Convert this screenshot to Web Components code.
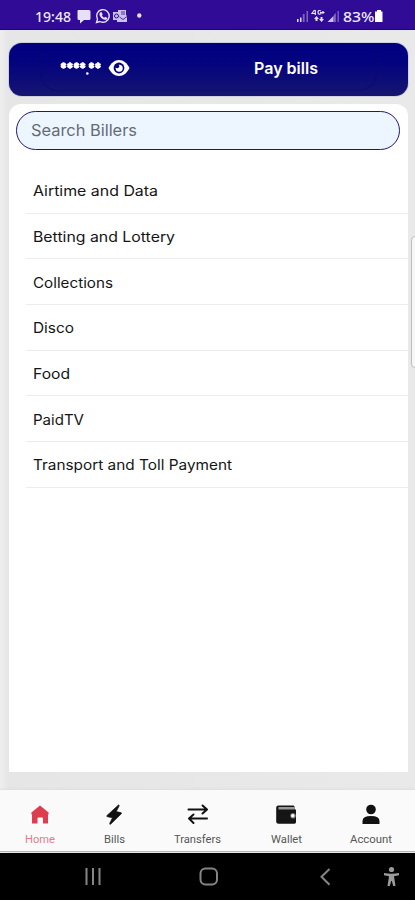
<!DOCTYPE html>
<html lang="en"><head><meta charset="utf-8"><title>Pay bills</title>
<style>
html,body{margin:0;height:900px;overflow:hidden;background:#e9e9ea;font-family:Inter,"Open Sans",sans-serif}
</style></head><body>
<bill-app></bill-app>
<script>
const define=(name,html,setup)=>customElements.define(name,class extends HTMLElement{
  connectedCallback(){
    if(this.shadowRoot)return;
    const t=document.createElement('template');
    t.innerHTML=typeof html==='function'?html(this):html;
    this.attachShadow({mode:'open'}).append(t.content.cloneNode(true));
    if(setup)setup(this);
  }
});

// Text stretched so that it spans the width given in "w".
define('fit-text',`<style>:host{display:inline-block;white-space:nowrap}span{display:inline-block;transform-origin:0 50%}</style><span><slot></slot></span>`,el=>{
  const s=el.shadowRoot.querySelector('span'),w=+el.getAttribute('w');
  const natural=s.getBoundingClientRect().width;
  el.style.width=w+'px';
  s.style.transform=`scaleX(${w/natural})`;
});

define('status-bar',`<style>
:host{display:flex;align-items:center;height:30px;box-sizing:border-box;padding:3px 31px 0 35px;background:#300b96;border-bottom:1px solid #240080;color:#eeeafc;font:500 14px "Noto Sans",sans-serif}
svg{display:block;fill:#e6e0f8;flex:none}i{flex:1}
</style>
<fit-text w="36">19:48</fit-text>
<svg width="75" height="18" viewBox="0 0 75 18">
<path d="M7 3h11q1.500 0 1.500 1.500v7q0 1.500-1.500 1.500h-5l-4 3.500v-3.500h-1q-1.500 0-1.500-1.500v-7q0-1.500 .5-1.500z"/>
<path d="M25.500 15.500l1-3.400a6.300 6.300 0 1 1 2.500 2.400z" fill="none" stroke="#e6e0f8" stroke-width="1.400"/>
<path d="M29 5.500l1.500-.5 1.200 2.400-.8 1c.5 1 1.300 1.800 2.300 2.300l1-.9 2.200 1.200c-.2 1.500-1.200 2-2.500 1.800-3-.6-5.300-3.400-5.500-5.600z"/>
<path d="M47 3h8v5l1 1v6h-10v-2h-4v-8h5z" opacity=".85"/><circle cx="45.500" cy="9" r="2" fill="none" stroke="#300b96"/><path d="M50 5h4M50 7h4M48.500 10l3.500 2.500 4-3" fill="none" stroke="#300b96" stroke-width=".8"/>
<circle cx="68.300" cy="8.500" r="2.200"/></svg><i></i>
<svg width="46" height="18" viewBox="0 0 46 18">
<path d="M0 12h1.500v3H0zM3 10.500h1.500v4.500H3z"/><path d="M5.800 7h1.800v8H5.800zM9.500 4h1.500v11H9.500z" opacity=".42"/>
<path d="M17.500 3l-2.500 3.500h4M18.300 3v5M24 4q-3-1.500-3 1.300t3 1.500v-1.300h-1M24.500 5.500h3M26 4v3" fill="none" stroke="#e6e0f8" stroke-width="1.200"/>
<path d="M17 12l2.500-3 2.500 3h-1.500v2h-2v-2zM22 12h1.500v-2h2v2h1.500l-2.500 3z"/>
<path d="M30.500 15l6-6v6z" opacity=".85"/><path d="M36.800 8l2-2v9h-2zM40.500 4h1.300v11h-1.300z" opacity=".45"/></svg>
<fit-text w="31.500">83%</fit-text>
<svg width="10" height="18" viewBox="0 0 10 18"><path d="M3 3h4v1.500h1.500v10.500h-7.500v-10.500h2z" fill="#fff"/></svg>`);

define('balance-header',`<style>
:host{display:flex;position:relative;box-sizing:border-box;height:53px;padding:0 90px 3px 51px;align-items:center;border-radius:13px;background:linear-gradient(#000080 0%,#04037f 35%,#151570 100%);box-shadow:0 0 1px #000080;color:#fff}
.rim{position:absolute;inset:5px 31px 5px 31px;border:solid #08086c;border-width:0 1px 1px;border-radius:5px 5px 18px 18px;opacity:.55}
.m{flex:none;margin-right:6px}.e{flex:none}i{flex:1}
fit-text{font-size:16.500px;font-weight:600;line-height:20px}
</style><div class="rim"></div>
<svg class="m" width="42" height="20" viewBox="0 0 42 20"><g fill="none" stroke="#fff" stroke-width="2.200" id="s"></g><circle cx="27.300" cy="15.500" r="1.300" fill="#fff"/></svg>
<svg class="e" width="22" height="20" viewBox="0 0 22 20"><path d="M.5 10C3 5 6.500 2 11 2S19 5 21.500 10C19 15 15.500 18 11 18S3 15 .5 10z" fill="#fff"/><circle cx="11" cy="10" r="5.400" fill="#060477"/><circle cx="11.200" cy="10.200" r="3.500" fill="#fff"/><circle cx="9.200" cy="8.300" r="2" fill="#060477"/></svg>
<i></i><fit-text w="64">Pay bills</fit-text>`,el=>{
  el.shadowRoot.querySelector('#s').innerHTML=[3.500,10,16.500,22.700,31.500,38].map(x=>`<path d="M${x} 4.300v6.400M${x-2.600} 6l5.200 3M${x-2.600} 9l5.200-3"/>`).join('');
});

define('search-box',`<style>:host{display:flex;align-items:center;box-sizing:border-box;height:39px;border:1.500px solid #211779;border-radius:20px;background:#edf6ff;padding:0 0 1px 13.500px;color:#646b75;font-size:16px}</style><fit-text w="106">Search Billers</fit-text>`);

define('biller-row',`<style>:host{display:flex;align-items:center;box-sizing:border-box;height:45.700px;margin-left:17px;padding:1px 0 0 7px;border-bottom:1px solid #ececec;color:#151515;font-size:14px}</style><slot></slot>`);

define('biller-card',`<style>:host{display:flex;flex-direction:column;box-sizing:border-box;height:668px;margin-top:8px;padding-top:7px;border-radius:12px 12px 0 0;background:#fff}search-box{margin:0 8px 18px 7px}</style>
<search-box></search-box>`+[['Airtime and Data',125],['Betting and Lottery',142],['Collections',80],['Disco',41],['Food',37],['PaidTV',51],['Transport and Toll Payment',199]].map(([t,w])=>`<biller-row><fit-text w="${w}">${t}</fit-text></biller-row>`).join(''));

define('nav-item',`<style>:host{display:flex;flex-direction:column;align-items:center;padding-top:12px;color:#565656;font:10px/12px Roboto,sans-serif}:host([active]){color:#e27b93}::slotted(svg){display:block;margin-bottom:7px}</style><slot></slot>`);

define('bottom-nav',`<style>:host{display:grid;grid-template-columns:79px 70px 97px 80px 89px;height:62px;box-sizing:border-box;padding-top:1px;margin-bottom:1px;background:#fafafa;box-shadow:0 -1px 2px #ddd;border-bottom:1px solid #b5b5b5}svg{fill:#111}</style>
<nav-item active><svg width="24" height="24" viewBox="0 0 24 24"><path style="fill:#dc3e50" d="M12 2.500l8 6.500q1.200 1 .6 2l-.6.500v9h-5v-5q0-1-1-1h-3.500q-1 0-1 1v5h-5.500v-9l-.6-.5q-.6-1 .6-2z"/></svg><fit-text w="30">Home</fit-text></nav-item>
<nav-item><svg width="24" height="24" viewBox="0 0 24 24"><path d="M16.500 2L5 12.500q-.8 1 .5 1.200l5 1-2.700 5.500q-.4 1.700 1 .8L19.300 10.800q.8-1-.5-1.200l-4.600-1L17 3.200q.5-1.500-.5-1.200z" stroke="#111" stroke-width=".7"/></svg><fit-text w="21">Bills</fit-text></nav-item>
<nav-item><svg width="24" height="24" viewBox="0 0 24 24"><path d="M2.500 6.500h18M16.500 2.500l4.500 4-4.500 4M21 15.500H3M7.500 11.500l-4.500 4 4.500 4.500" fill="none" stroke="#111" stroke-width="2" stroke-linecap="round" stroke-linejoin="round"/></svg><fit-text w="47">Transfers</fit-text></nav-item>
<nav-item><svg width="24" height="24" viewBox="0 0 24 24"><path d="M4.500 2.500h15q1 0 1 1.500v2q1.500 0 1.500 1.500v11.500q0 1.800-1.500 1.800h-16q-2.300 0-2.300-2V4.500q0-2 2.300-2z" fill="#151515"/><path d="M4.500 4h16v2.500h-16z" fill="#999"/><circle cx="19" cy="12.700" r="2.800" fill="#777"/><circle cx="18.800" cy="12.700" r="1.700" fill="#fff"/></svg><fit-text w="31">Wallet</fit-text></nav-item>
<nav-item><svg width="24" height="24" viewBox="0 0 24 24"><circle cx="12" cy="6.500" r="4.800"/><path d="M3.500 21v-3q0-5 8.500-5t8.500 5v3z"/></svg><fit-text w="42">Account</fit-text></nav-item>`);

define('system-nav',`<style>:host{display:block;height:47px;background:#000}svg{display:block;fill:none;stroke:#858585;stroke-width:2}</style>
<svg width="415" height="47" viewBox="0 1 415 47"><path d="M86.500 16v17M93 16v17M99.500 16v17"/><rect x="200.500" y="16.500" width="16.500" height="16" rx="5"/><path d="M329.500 17l-8 7.800 8 8"/><g stroke="none" fill="#9b9b9b" transform="translate(0 1)"><circle cx="391.500" cy="16.500" r="2.600"/><path d="M384 20q7.500 1.500 15 0v2.300l-5 1 1.500 9.700h-2.300l-1.400-5h-.6l-1.400 5h-2.300l1.500-9.700-5-1z"/></g></svg>`);

define('bill-app',`<style>:host{display:flex;flex-direction:column;position:relative;width:415px;height:900px;overflow:hidden;background:linear-gradient(90deg,#eee 0,#e6e6e6 9px,#e9e9e9 100%)}
main{flex:1;padding:13px 7px 0 9px}
.handle{position:absolute;right:-5px;top:236px;width:7px;height:130px;border:1px solid #bdbdbd;border-radius:4px;background:#f7f7f7}</style>
<status-bar></status-bar><main><balance-header></balance-header><biller-card></biller-card></main><bottom-nav></bottom-nav><system-nav></system-nav><div class="handle"></div>`);
</script></body></html>
